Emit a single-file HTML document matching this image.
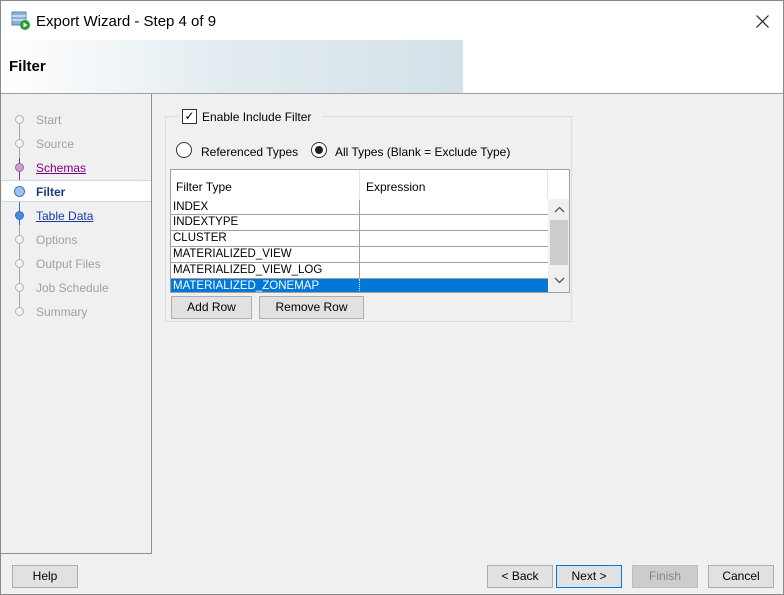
<!DOCTYPE html>
<html><head><style>
*{margin:0;padding:0;box-sizing:border-box}
body{width:784px;height:595px;background:#f0f0f0;font-family:"Liberation Sans",sans-serif;font-size:12px;color:#000;position:relative;overflow:hidden}
.a{position:absolute}
.btn{position:absolute;background:#e1e1e1;border:1px solid #adadad;text-align:center;line-height:20px;font-size:12px}
.step{position:absolute;left:36px;color:#a0a0a0;font-size:12px}
.node{position:absolute;left:15px;width:9px;height:9px;border-radius:50%;border:1px solid #b0b0b0;background:#f4f4f4}
.row{position:absolute;left:0;width:378px;height:16px;border-bottom:1px solid #a0a0a0;font-size:11.5px;line-height:15px;padding-left:2px}
.row span{position:absolute;left:188px;top:0;height:16px;border-left:1px solid #a0a0a0;width:190px}
</style></head><body>
<div class="a" style="left:0;top:0;width:784px;height:595px;border:1px solid #888"></div>
<div class="a" style="left:1px;top:1px;width:782px;height:39px;background:#fff"></div>
<svg class="a" style="left:11px;top:11px" width="20" height="20" viewBox="0 0 20 20"><rect x="1" y="1" width="14" height="13" fill="#8ab0d8" stroke="#5a7fb0"/><line x1="1" y1="5" x2="15" y2="5" stroke="#fff"/><line x1="1" y1="9" x2="15" y2="9" stroke="#fff"/><circle cx="14" cy="14" r="5" fill="#2a9a3a"/><path d="M12.5 11.5 L16.5 14 L12.5 16.5Z" fill="#fff"/></svg>
<div class="a" style="left:36px;top:13px;font-size:15px">Export Wizard - Step 4 of 9</div>
<svg class="a" style="left:756px;top:15px" width="13" height="13" viewBox="0 0 13 13"><path d="M0.5 0.5L12.5 12.5M12.5 0.5L0.5 12.5" stroke="#222" stroke-width="1.2"/></svg>
<div class="a" style="left:1px;top:40px;width:462px;height:53px;background:linear-gradient(90deg,#fff 0%,#e4edf1 45%,#d3e1e8 100%)"></div>
<div class="a" style="left:463px;top:40px;width:320px;height:53px;background:#fff"></div>
<div class="a" style="left:9px;top:58px;font-size:15px;font-weight:bold">Filter</div>
<div class="a" style="left:1px;top:93px;width:782px;height:1px;background:#a0a0a0"></div>
<div class="a" style="left:1px;top:94px;width:151px;height:460px;border-right:1px solid #909090;border-bottom:1px solid #909090"></div>
<div class="a" style="left:19px;top:123px;width:1px;height:190px;background:#a8a8a8"></div>
<div class="a" style="left:19px;top:158px;width:1px;height:30px;background:#8a2a8a"></div>
<div class="a" style="left:19px;top:195px;width:1px;height:30px;background:#3070d0"></div>
<div class="a" style="left:2px;top:180px;width:149px;height:22px;background:#fff;border-top:1px solid #c8d8e8;border-bottom:1px solid #c8d8e8"></div>
<div class="node" style="top:115px"></div><div class="step" style="top:113px">Start</div>
<div class="node" style="top:139px"></div><div class="step" style="top:137px">Source</div>
<div class="node" style="top:163px;background:#c8a0c8;border-color:#9a6a9a"></div><div class="step" style="top:161px;color:#800080;text-decoration:underline">Schemas</div>
<div class="node" style="top:186px;width:11px;height:11px;left:14px;background:#9cc4ec;border-color:#3a78c0"></div><div class="step" style="top:185px;color:#1a3a80;font-weight:bold">Filter</div>
<div class="node" style="top:211px;background:#4a8ad8;border-color:#3070c0"></div><div class="step" style="top:209px;color:#1a3aa0;text-decoration:underline">Table Data</div>
<div class="node" style="top:235px"></div><div class="step" style="top:233px">Options</div>
<div class="node" style="top:259px"></div><div class="step" style="top:257px">Output Files</div>
<div class="node" style="top:283px"></div><div class="step" style="top:281px">Job Schedule</div>
<div class="node" style="top:307px"></div><div class="step" style="top:305px">Summary</div>
<div class="a" style="left:165px;top:116px;width:407px;height:206px;border:1px solid #dcdcdc"></div>
<div class="a" style="left:178px;top:108px;width:144px;height:16px;background:#f0f0f0"></div>
<div class="a" style="left:182px;top:109px;width:15px;height:15px;border:1px solid #333;background:#fff;font-size:12px;line-height:13px;text-align:center">✓</div>
<div class="a" style="left:202px;top:110px">Enable Include Filter</div>
<div class="a" style="left:176px;top:142px;width:16px;height:16px;border:1px solid #333;border-radius:50%;background:#fff"></div>
<div class="a" style="left:201px;top:145px">Referenced Types</div>
<div class="a" style="left:311px;top:142px;width:16px;height:16px;border:1px solid #333;border-radius:50%;background:#fff"></div>
<div class="a" style="left:315px;top:146px;width:8px;height:8px;border-radius:50%;background:#222"></div>
<div class="a" style="left:335px;top:145px">All Types (Blank = Exclude Type)</div>
<div class="a" style="left:170px;top:169px;width:400px;height:124px;border:1px solid #a0a0a0;background:#fff;overflow:hidden">
 <div class="a" style="left:0;top:0;width:377px;height:30px;background:#fff"></div>
 <div class="a" style="left:188px;top:0;width:1px;height:30px;background:#e5e5e5"></div>
 <div class="a" style="left:376px;top:0;width:1px;height:30px;background:#e5e5e5"></div>
 <div class="a" style="left:5px;top:10px">Filter Type</div>
 <div class="a" style="left:195px;top:10px">Expression</div>
 <div class="row" style="top:29px;border-top:1px solid #fff">INDEX<span></span></div>
 <div class="row" style="top:45px">INDEXTYPE<span></span></div>
 <div class="row" style="top:61px">CLUSTER<span></span></div>
 <div class="row" style="top:77px">MATERIALIZED_VIEW<span></span></div>
 <div class="row" style="top:93px">MATERIALIZED_VIEW_LOG<span></span></div>
 <div class="row" style="top:109px;background:#0078d7;color:#fff;border:none">MATERIALIZED_ZONEMAP<span style="border-left:1px dotted #fff"></span></div>
 <div class="a" style="left:377px;top:29px;width:22px;height:94px;background:#f0f0f0"></div>
 <div class="a" style="left:379px;top:50px;width:18px;height:45px;background:#cdcdcd"></div>
 <svg class="a" style="left:383px;top:36px" width="11" height="7"><path d="M1 6L5.5 1.5L10 6" stroke="#555" fill="none" stroke-width="1.3"/></svg>
 <svg class="a" style="left:383px;top:107px" width="11" height="7"><path d="M1 1L5.5 5.5L10 1" stroke="#555" fill="none" stroke-width="1.3"/></svg>
</div>
<div class="btn" style="left:171px;top:296px;width:81px;height:23px">Add Row</div>
<div class="btn" style="left:259px;top:296px;width:105px;height:23px">Remove Row</div>
<div class="btn" style="left:12px;top:565px;width:66px;height:23px">Help</div>
<div class="btn" style="left:487px;top:565px;width:66px;height:23px">&lt; Back</div>
<div class="btn" style="left:556px;top:565px;width:66px;height:23px;border:1px solid #0078d7">Next &gt;</div>
<div class="btn" style="left:632px;top:565px;width:66px;height:23px;background:#ccc;border-color:#bfbfbf;color:#838383">Finish</div>
<div class="btn" style="left:708px;top:565px;width:66px;height:23px">Cancel</div>
</body></html>
